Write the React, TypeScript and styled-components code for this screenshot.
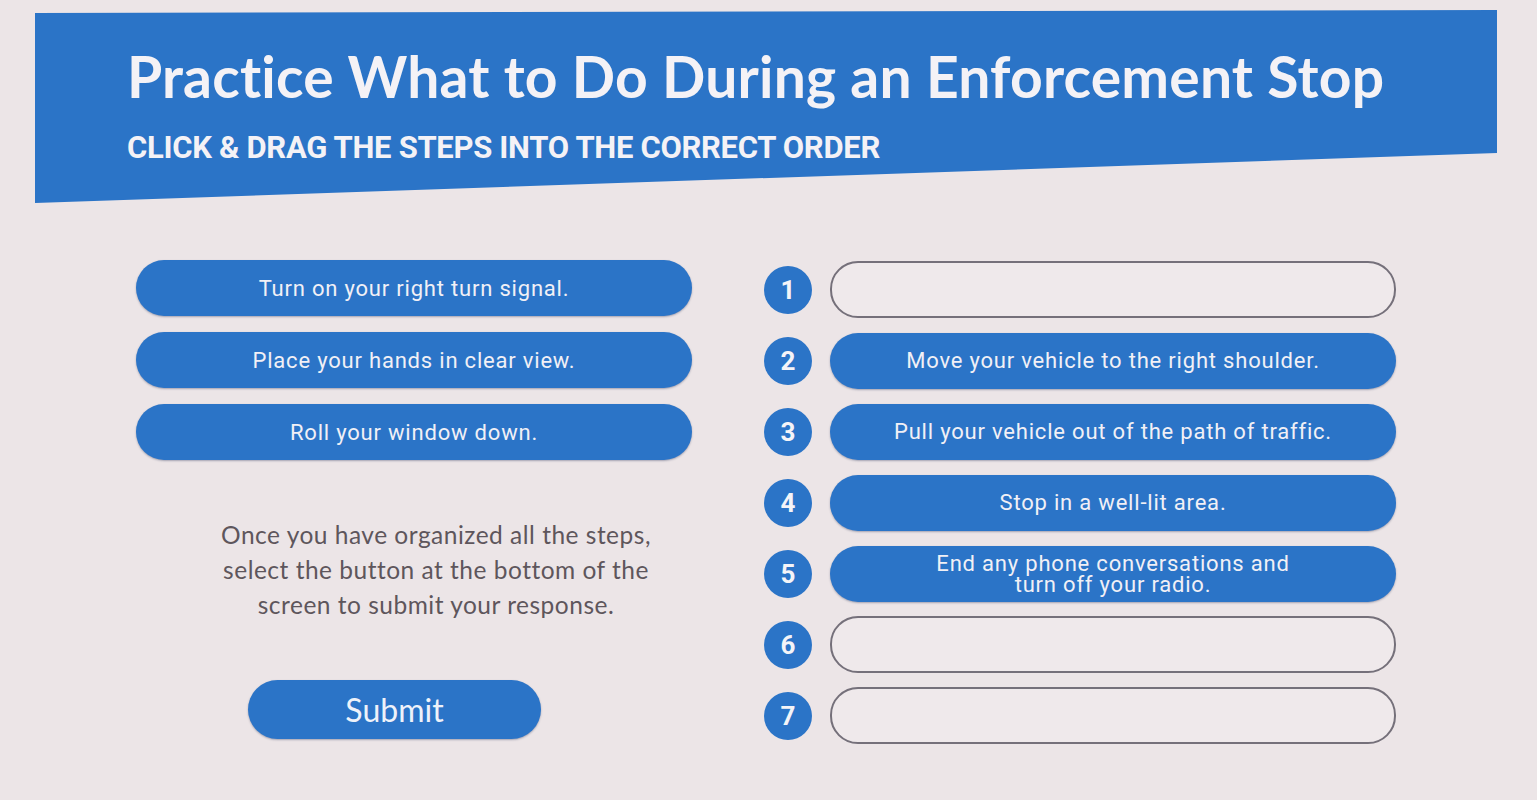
import React from "react";
import styled, { createGlobalStyle } from "styled-components";

const GlobalStyle = createGlobalStyle`
    html, body {
        margin: 0;
        padding: 0;
        background: #ece5e7;
    }
    body {
        font-family: "Roboto", "Liberation Sans", sans-serif;
    }
`;

const bankSteps = [
    "Turn on your right turn signal.",
    "Place your hands in clear view.",
    "Roll your window down.",
];

const slots: (string | null)[] = [
    null,
    "Move your vehicle to the right shoulder.",
    "Pull your vehicle out of the path of traffic.",
    "Stop in a well-lit area.",
    "End any phone conversations and\nturn off your radio.",
    null,
    null,
];

const App = () => {
    return (
        <Page>
            <GlobalStyle />
            <Banner>
                <Title>Practice What to Do During an Enforcement Stop</Title>
                <Subtitle>CLICK &amp; DRAG THE STEPS INTO THE CORRECT ORDER</Subtitle>
            </Banner>
            <Board>
                <LeftColumn>
                    <Bank>
                        {bankSteps.map((s) => (
                            <StepPill key={s} wide>
                                {s}
                            </StepPill>
                        ))}
                    </Bank>
                    <Instructions>
                        Once you have organized all the steps,
                        <br />
                        select the button at the bottom of the
                        <br />
                        screen to submit your response.
                    </Instructions>
                    <SubmitButton>Submit</SubmitButton>
                </LeftColumn>
                <OrderList>
                    {slots.map((s, i) => (
                        <OrderRow key={i}>
                            <NumberBadge>{i + 1}</NumberBadge>
                            {s ? <StepPill>{s}</StepPill> : <EmptySlot />}
                        </OrderRow>
                    ))}
                </OrderList>
            </Board>
        </Page>
    );
};

const Page = styled.div`
    width: 1537px;
    height: 800px;
    overflow: hidden;
    background: #ece5e7;
    padding-top: 10px;
    box-sizing: border-box;
`;

const Banner = styled.header`
    margin-left: 35px;
    width: 1462px;
    height: 193px;
    box-sizing: border-box;
    background: #2b74c7;
    clip-path: polygon(0 3px, 100% 0, 100% 143px, 0 100%);
    padding: 33px 0 0 92px;
    color: #f4f2f6;
`;

const Title = styled.h1`
    margin: 0;
    font-family: "Lato", "Liberation Sans", sans-serif;
    font-weight: 700;
    font-size: 57px;
    line-height: 66px;
    letter-spacing: 0.2px;
`;

const Subtitle = styled.p`
    margin: 22px 0 0;
    font-family: "Roboto", "Liberation Sans", sans-serif;
    font-weight: 700;
    font-size: 31px;
    line-height: 34px;
    letter-spacing: -0.3px;
`;

const Board = styled.main`
    display: flex;
    gap: 72px;
    padding: 57px 0 0 136px;
`;

const LeftColumn = styled.section`
    width: 556px;
    display: flex;
    flex-direction: column;
    align-items: center;
`;

const Bank = styled.div`
    width: 100%;
    display: flex;
    flex-direction: column;
    gap: 16px;
`;

const StepPill = styled.div<{ wide?: boolean }>`
    flex: ${(p) => (p.wide ? "none" : "1")};
    height: 56px;
    box-sizing: border-box;
    border-radius: 28px;
    background: #2b74c7;
    color: #f1f0f6;
    display: flex;
    align-items: center;
    justify-content: center;
    text-align: center;
    white-space: pre-line;
    font-size: 22px;
    line-height: 21px;
    letter-spacing: 0.8px;
    box-shadow: 0 1px 2px rgba(30, 40, 80, 0.35);
`;

const Instructions = styled.p`
    margin: 57px 0 0 44px;
    text-align: center;
    font-family: "Lato", "Liberation Sans", sans-serif;
    font-size: 24.5px;
    line-height: 35px;
    color: #5e565c;
    letter-spacing: 0.5px;
`;

const SubmitButton = styled.button`
    margin: 58px 0 0 112px;
    align-self: flex-start;
    width: 293px;
    height: 59px;
    border: none;
    border-radius: 30px;
    background: #2b74c7;
    color: #eef2fa;
    font-family: "Lato", "Liberation Sans", sans-serif;
    font-size: 32px;
    font-weight: 400;
    box-shadow: 0 1px 2px rgba(30, 40, 80, 0.35);
    cursor: pointer;
`;

const OrderList = styled.section`
    width: 632px;
    display: flex;
    flex-direction: column;
    gap: 14px;
    margin-top: 1px;
`;

const OrderRow = styled.div`
    display: flex;
    align-items: center;
    gap: 18px;
    height: 57px;
`;

const NumberBadge = styled.div`
    width: 48px;
    height: 48px;
    flex: none;
    border-radius: 50%;
    background: #2b74c7;
    color: #f4f4f8;
    display: flex;
    align-items: center;
    justify-content: center;
    font-weight: 700;
    font-size: 26px;
`;

const EmptySlot = styled.div`
    flex: 1;
    height: 57px;
    box-sizing: border-box;
    border-radius: 28px;
    border: 2px solid #75707a;
    background: #efe9eb;
`;

export default App;
